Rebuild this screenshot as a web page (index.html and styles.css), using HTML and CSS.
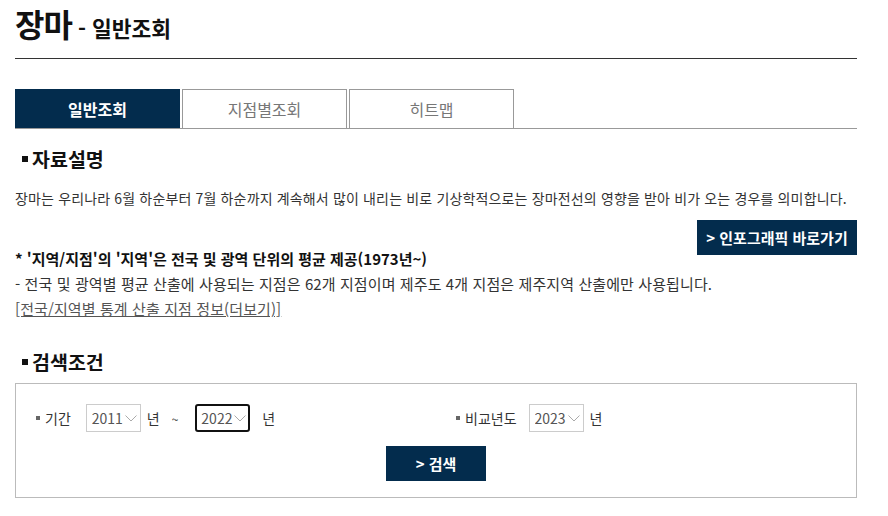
FILE: index.html
```html
<!DOCTYPE html>
<html lang="ko">
<head>
    <meta charset="UTF-8">
    <meta name="viewport" content="width=device-width, initial-scale=1.0">
    <title>장마 - 일반조회</title>
    <link rel="stylesheet" href="styles.css">
</head>
<body>
    <div class="container">

        <!-- Title -->
        <div class="page-title">
            <h1>장마</h1>
            <span class="sub-title">- 일반조회</span>
        </div>

        <!-- Tabs -->
        <ul class="tabs">
            <li class="tab active">일반조회</li>
            <li class="tab">지점별조회</li>
            <li class="tab">히트맵</li>
        </ul>

        <!-- 자료설명 -->
        <h2 class="section-title">자료설명</h2>
        <p class="desc">장마는 우리나라 6월 하순부터 7월 하순까지 계속해서 많이 내리는 비로 기상학적으로는 장마전선의 영향을 받아 비가 오는 경우를 의미합니다.</p>

        <div class="infographic">
            <button class="btn-navy btn-info">&gt; 인포그래픽 바로가기</button>
        </div>

        <p class="note-title">* '지역/지점'의 '지역'은 전국 및 광역 단위의 평균 제공(1973년~)</p>
        <p class="note">- 전국 및 광역별 평균 산출에 사용되는 지점은 62개 지점이며 제주도 4개 지점은 제주지역 산출에만 사용됩니다.</p>
        <p class="note"><a href="#" class="more-link">[전국/지역별 통계 산출 지점 정보(더보기)]</a></p>

        <!-- 검색조건 -->
        <h2 class="section-title search-title">검색조건</h2>
        <div class="search-box">
            <div class="search-row">
                <div class="search-col">
                    <span class="label">기간</span>
                    <label class="select-box">
                        <select><option>2011</option></select>
                        <svg width="12" height="7" viewBox="0 0 12 7"><path d="M0.5 0.5 L6 6 L11.5 0.5" fill="none" stroke="#aaa" stroke-width="1"/></svg>
                    </label>
                    <span class="unit">년</span>
                    <span class="tilde">~</span>
                    <label class="select-box focused">
                        <select><option>2022</option></select>
                        <svg width="12" height="7" viewBox="0 0 12 7"><path d="M0.5 0.5 L6 6 L11.5 0.5" fill="none" stroke="#aaa" stroke-width="1"/></svg>
                    </label>
                    <span class="unit">년</span>
                </div>
                <div class="search-col">
                    <span class="label label-compare">비교년도</span>
                    <label class="select-box">
                        <select><option>2023</option></select>
                        <svg width="12" height="7" viewBox="0 0 12 7"><path d="M0.5 0.5 L6 6 L11.5 0.5" fill="none" stroke="#aaa" stroke-width="1"/></svg>
                    </label>
                    <span class="unit">년</span>
                </div>
            </div>
            <div class="search-btn-wrap">
                <button class="btn-navy btn-search">&gt; 검색</button>
            </div>
        </div>
    </div>
</body>
</html>
```

FILE: styles.css
```css
body {
    margin: 0;
    font-family: "Noto Sans CJK KR", "Noto Sans", sans-serif;
    color: #333;
    background: #fff;
}
.container {
    width: 842px;
    padding: 0 15px;
}
.page-title {
    display: flex;
    align-items: baseline;
    gap: 6px;
    padding: 1px 0 8px;
    border-bottom: 1px solid #333;
}
.page-title h1 {
    margin: 0;
    font-size: 32px;
    line-height: 44px;
    font-weight: bold;
    color: #111;
    letter-spacing: -1px;
}
.sub-title {
    font-size: 21.5px;
    line-height: 44px;
    font-weight: bold;
    color: #111;
}
.tabs {
    display: flex;
    gap: 2px;
    list-style: none;
    margin: 30px 0 0;
    padding: 0;
    border-bottom: 1px solid #999;
}
.tab {
    width: 163px;
    height: 38px;
    line-height: 38px;
    text-align: center;
    font-size: 16px;
    color: #777;
    border: 1px solid #999;
    border-bottom: none;
}
.tab.active {
    background-color: #032c4d;
    border-color: #032c4d;
    color: #fff;
    font-weight: bold;
}
.section-title {
    margin: 18px 0 0;
    padding-left: 7px;
    font-size: 19.5px;
    line-height: 24px;
    font-weight: bold;
    color: #111;
    display: flex;
    align-items: center;
    gap: 4px;
}
.section-title::before {
    content: "";
    width: 6px;
    height: 6px;
    background: #111;
}
.desc {
    margin: 16px 0 0;
    font-size: 14px;
    line-height: 22px;
    letter-spacing: 0.15px;
    color: #333;
}
.infographic {
    display: flex;
    justify-content: flex-end;
    margin: 11px 0 -9px;
}
.btn-navy {
    border: none;
    background-color: #032c4d;
    color: #fff;
    font-family: inherit;
    font-weight: bold;
    font-size: 15px;
    height: 35px;
    cursor: pointer;
}
.btn-info {
    width: 160px;
}
.note-title,
.note {
    margin: 0;
    font-size: 15px;
    line-height: 25px;
    letter-spacing: 0.1px;
}
.note-title {
    font-weight: bold;
    letter-spacing: 0;
    color: #111;
}
.more-link {
    color: #555;
    text-decoration: underline;
}
.search-title {
    margin-top: 29px;
}
.search-box {
    margin-top: 9px;
    border: 1px solid #bbb;
    padding: 20px 0 16px;
}
.search-row {
    display: flex;
}
.search-col {
    width: 50%;
    padding-left: 20px;
    display: flex;
    align-items: center;
    font-size: 14px;
    color: #333;
}
.label {
    display: flex;
    align-items: center;
    gap: 5px;
    margin-right: 15px;
}
.label-compare {
    margin-right: 12px;
}
.label::before {
    content: "";
    width: 4px;
    height: 4px;
    background: #666;
}
.select-box {
    display: flex;
    align-items: center;
    gap: 1px;
    height: 26px;
    width: 48px;
    padding-left: 5px;
    border: 1px solid #ccc;
}
.select-box select {
    appearance: none;
    border: none;
    background: none;
    padding: 0;
    font-family: inherit;
    font-size: 14px;
    color: #555;
    outline: none;
}
.select-box.focused {
    border: 2px solid #111;
    border-radius: 3px;
    height: 24px;
    width: 47px;
    padding-left: 4px;
}
.unit {
    margin-left: 6px;
}
.tilde {
    margin: 0 17px 0 12px;
    font-size: 12px;
}
.focused + .unit {
    margin-left: 12px;
}
.search-btn-wrap {
    display: flex;
    justify-content: center;
    margin-top: 14px;
}
.btn-search {
    width: 100px;
}
```
